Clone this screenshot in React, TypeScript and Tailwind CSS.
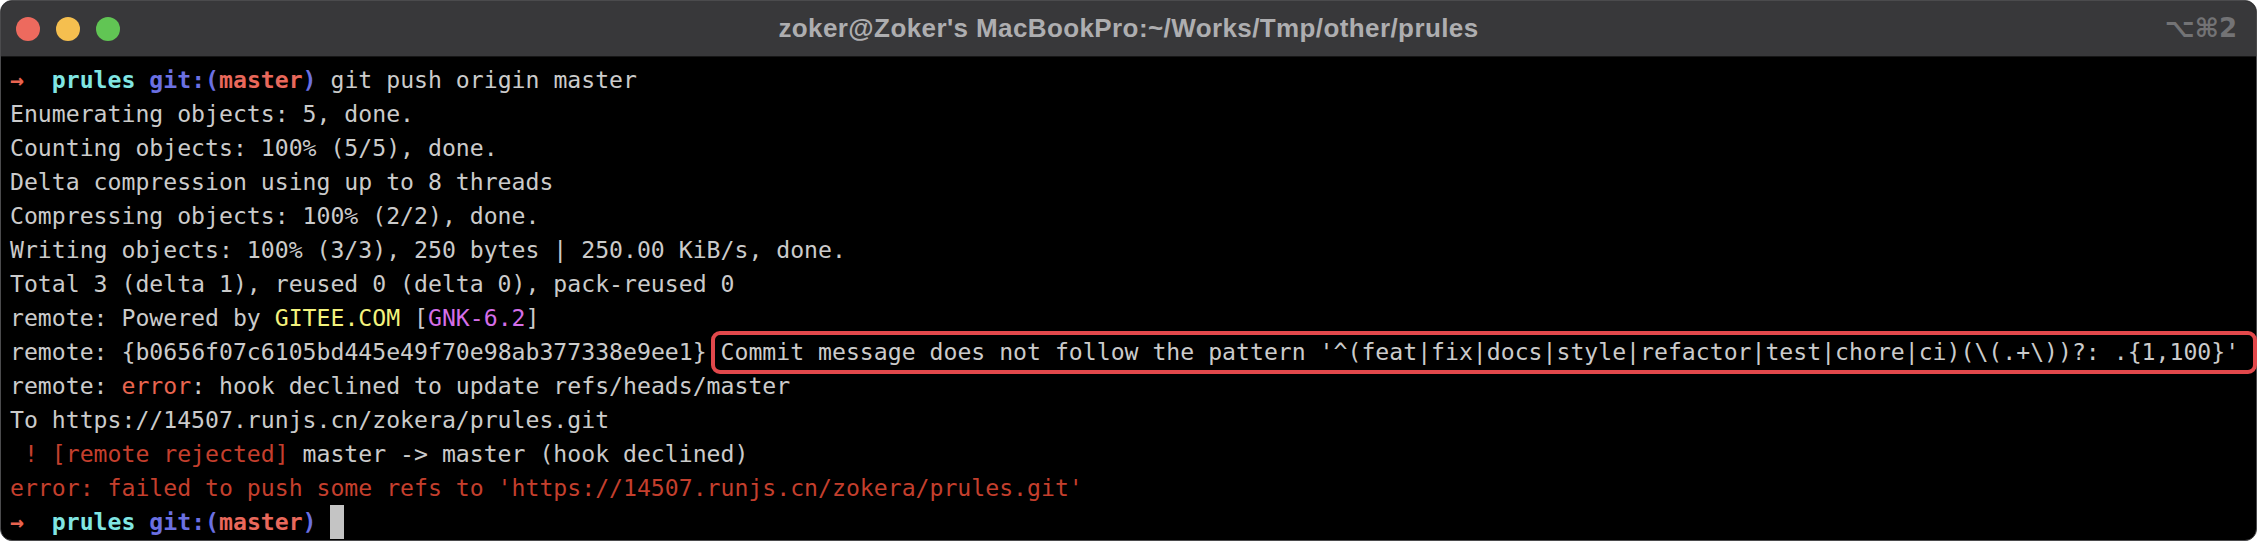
import React from 'react';

const mono = { fontFamily: '"DejaVu Sans Mono", "Liberation Mono", monospace' };

const Prompt: React.FC = () => (
  <>
    <span className="text-[#e9634f] font-bold">→</span>
    {'  '}
    <span className="text-[#80e6e3] font-bold">prules</span>{' '}
    <span className="text-[#6b70e2] font-bold">git:(</span>
    <span className="text-[#e9685b] font-bold">master</span>
    <span className="text-[#6b70e2] font-bold">)</span>{' '}
  </>
);

const App: React.FC = () => {
  const plain = [
    'Enumerating objects: 5, done.',
    'Counting objects: 100% (5/5), done.',
    'Delta compression using up to 8 threads',
    'Compressing objects: 100% (2/2), done.',
    'Writing objects: 100% (3/3), 250 bytes | 250.00 KiB/s, done.',
    'Total 3 (delta 1), reused 0 (delta 0), pack-reused 0',
  ];

  return (
    <div className="w-[2260px] h-[542px] bg-white">
      <div className="w-[2257px] h-[541px] rounded-[12px] border border-[#4b4b4d] bg-black flex flex-col">
        {/* Title bar */}
        <div className="h-[56px] shrink-0 grid grid-cols-[1fr_auto_1fr] items-center bg-[#38383a] rounded-t-[11px] border-b border-[#161616]">
          <div className="flex items-center gap-[16px] pl-[15px]">
            <div className="w-[24px] h-[24px] rounded-full bg-[#ed6a5e]"></div>
            <div className="w-[24px] h-[24px] rounded-full bg-[#f5bf4f]"></div>
            <div className="w-[24px] h-[24px] rounded-full bg-[#61c554]"></div>
          </div>
          <div
            className="text-[26px] font-bold text-[#aeaeb0] tracking-[0.4px]"
            style={{ fontFamily: '"Liberation Sans", Arial, sans-serif' }}
          >
            zoker@Zoker's MacBookPro:~/Works/Tmp/other/prules
          </div>
          <div
            className="flex justify-end pr-[19px] text-[26px] font-bold text-[#737375]"
            style={{ fontFamily: '"DejaVu Sans", "Liberation Sans", sans-serif' }}
          >
            ⌥⌘2
          </div>
        </div>

        {/* Terminal body */}
        <div
          className="pt-[6px] pl-[9px] text-[23.15px] leading-[34px] text-[#cbcbcb] whitespace-pre"
          style={mono}
        >
          <div>
            <Prompt />
            git push origin master
          </div>
          {plain.map((line, i) => (
            <div key={i}>{line}</div>
          ))}
          <div>
            remote: Powered by <span className="text-[#f3f27c]">GITEE.COM</span> [
            <span className="text-[#d46ee8]">GNK-6.2</span>]
          </div>
          <div>
            remote: {'{b0656f07c6105bd445e49f70e98ab377338e9ee1} '}
            <span className="relative">
              <span className="absolute -left-[10px] -right-[18px] -top-[8px] -bottom-[9px] rounded-[9px] border-[4px] border-[#e2484b]"></span>
              Commit message does not follow the pattern '^(feat|fix|docs|style|refactor|test|chore|ci)(\(.+\))?: .{'{1,100}'}'
            </span>
          </div>
          <div>
            remote: <span className="text-[#e9654f]">error</span>: hook declined to update refs/heads/master
          </div>
          <div>To https://14507.runjs.cn/zokera/prules.git</div>
          <div>
            <span className="text-[#c43f2d]">{' ! [remote rejected]'}</span> master -&gt; master (hook declined)
          </div>
          <div className="text-[#c43f2d]">error: failed to push some refs to 'https://14507.runjs.cn/zokera/prules.git'</div>
          <div className="flex items-start">
            <span>
              <Prompt />
            </span>
            <span className="inline-block w-[14px] h-[34px] bg-[#c4c4c4]"></span>
          </div>
        </div>
      </div>
    </div>
  );
};

export default App;
